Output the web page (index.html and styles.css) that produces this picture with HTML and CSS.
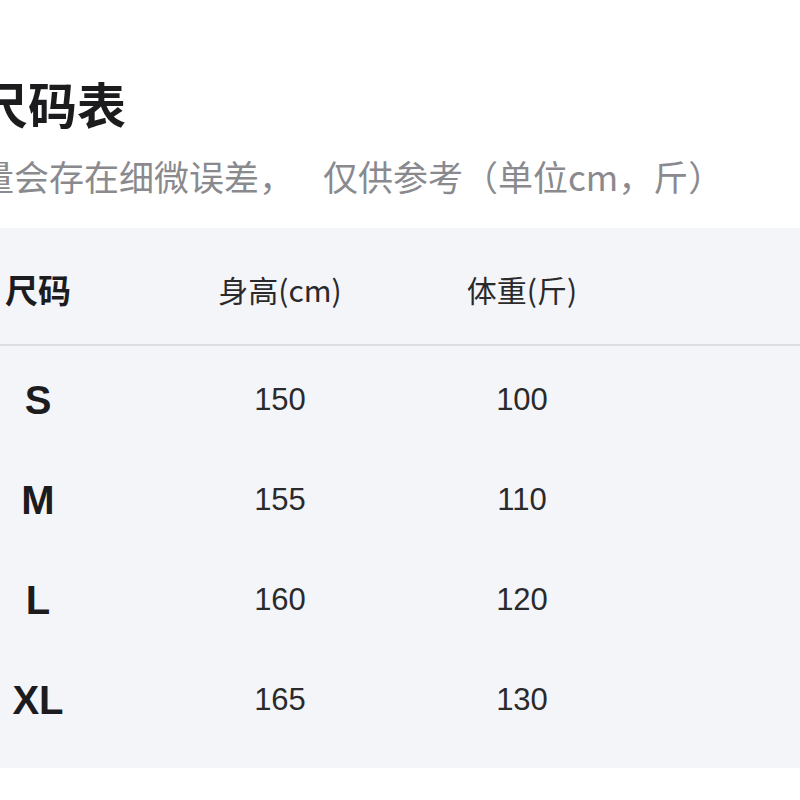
FILE: index.html
```html
<!DOCTYPE html>
<html lang="zh-CN">
<head>
<meta charset="utf-8">
<title>尺码表</title>
<link rel="stylesheet" href="styles.css">
</head>
<body>
<div class="sheet">
  <div class="head">
    <h1 class="title">尺码表</h1>
    <p class="subtitle">量会存在细微误差，<span class="gap"></span>仅供参考（单位cm，斤）</p>
  </div>
  <div class="table">
    <div class="row header">
      <div class="cell size-h">尺码</div>
      <div class="cell">身高(cm)</div>
      <div class="cell">体重(斤)</div>
      <div class="cell"></div>
    </div>
    <div class="body">
      <div class="row">
        <div class="cell size">S</div>
        <div class="cell num">150</div>
        <div class="cell num">100</div>
        <div class="cell"></div>
      </div>
      <div class="row">
        <div class="cell size">M</div>
        <div class="cell num">155</div>
        <div class="cell num">110</div>
        <div class="cell"></div>
      </div>
      <div class="row">
        <div class="cell size">L</div>
        <div class="cell num">160</div>
        <div class="cell num">120</div>
        <div class="cell"></div>
      </div>
      <div class="row">
        <div class="cell size">XL</div>
        <div class="cell num">165</div>
        <div class="cell num">130</div>
        <div class="cell"></div>
      </div>
    </div>
  </div>
</div>
</body>
</html>
```
FILE: styles.css
```css
html, body {
  margin: 0;
  padding: 0;
  background: #ffffff;
  overflow: hidden;
  width: 800px;
  height: 800px;
}

body {
  font-family: "Noto Sans CJK SC", "Liberation Sans", sans-serif;
  color: #222;
}

.sheet {
  margin-left: -83px;
  width: 1000px;
  padding-top: 73px;
}

.head {
  padding-left: 62px;
}

.title {
  margin: 0;
  font-size: 49px;
  line-height: 60px;
  font-weight: 700;
  color: #1c1c1e;
}

.subtitle {
  margin: 21px 0 0;
  font-size: 35px;
  line-height: 44px;
  color: #8a8a8e;
}

.gap {
  display: inline-block;
  width: 29px;
}

.table {
  margin-top: 30px;
  background: #f4f5f9;
  padding-bottom: 18px;
}

.row {
  display: grid;
  grid-template-columns: 242px 242px 242px 1fr;
  align-items: center;
  height: 100px;
}

.header {
  height: 118px;
  border-bottom: 2px solid #dcdde2;
  padding-top: 6px;
  box-sizing: border-box;
}

.body {
  padding-top: 4px;
}

.cell {
  text-align: center;
  font-size: 30px;
  color: #2a2a2c;
}

.size-h {
  font-size: 33px;
  font-weight: 700;
  color: #1c1c1e;
}

.size {
  font-family: "Liberation Sans", "Noto Sans", sans-serif;
  font-size: 40px;
  font-weight: 700;
  color: #1c1c1e;
}

.num {
  font-family: "Liberation Sans", "Noto Sans", sans-serif;
  font-size: 31px;
  color: #2a2a2c;
}
```
